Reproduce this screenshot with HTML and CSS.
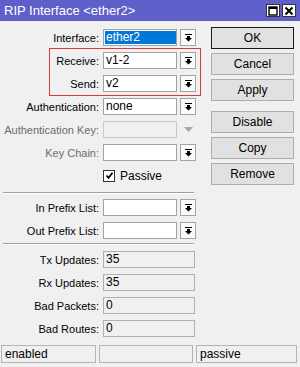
FILE: index.html
```html
<!DOCTYPE html>
<html>
<head>
<meta charset="utf-8">
<title>RIP Interface</title>
<link rel="stylesheet" href="styles.css">
</head>
<body>
<div class="window">
	<div class="titlebar">
		<span class="title">RIP Interface &lt;ether2&gt;</span>
		<span class="tbtn"><svg width="10" height="10" viewBox="0 0 10 10"><rect x="1" y="1" width="8" height="8" fill="none" stroke="#000" stroke-width="1.4"/><rect x="1" y="1" width="8" height="2" fill="#000"/></svg></span>
		<span class="tbtn"><svg width="10" height="10" viewBox="0 0 10 10"><path d="M1.5 1.5L8.5 8.5M8.5 1.5L1.5 8.5" stroke="#000" stroke-width="2"/></svg></span>
	</div>

	<div class="content">
		<div class="form">
			<div class="row">
				<span class="label">Interface:</span>
				<span class="field"><span class="sel">ether2</span></span>
				<span class="drop"><svg width="7" height="8" viewBox="0 0 7 8"><rect x="0" y="0" width="7" height="1"/><polygon points="2,2 5,2 5,4 7,4 3.5,7.5 0,4 2,4"/></svg></span>
			</div>
			<div class="group">
				<div class="row">
					<span class="label">Receive:</span>
					<span class="field">v1-2</span>
					<span class="drop"><svg width="7" height="8" viewBox="0 0 7 8"><rect x="0" y="0" width="7" height="1"/><polygon points="2,2 5,2 5,4 7,4 3.5,7.5 0,4 2,4"/></svg></span>
				</div>
				<div class="row">
					<span class="label">Send:</span>
					<span class="field">v2</span>
					<span class="drop"><svg width="7" height="8" viewBox="0 0 7 8"><rect x="0" y="0" width="7" height="1"/><polygon points="2,2 5,2 5,4 7,4 3.5,7.5 0,4 2,4"/></svg></span>
				</div>
			</div>
			<div class="row">
				<span class="label">Authentication:</span>
				<span class="field">none</span>
				<span class="drop"><svg width="7" height="8" viewBox="0 0 7 8"><rect x="0" y="0" width="7" height="1"/><polygon points="2,2 5,2 5,4 7,4 3.5,7.5 0,4 2,4"/></svg></span>
			</div>
			<div class="row">
				<span class="label dim">Authentication Key:</span>
				<span class="field off"></span>
				<span class="arrow"><svg width="9" height="5" viewBox="0 0 9 5"><polygon points="0,0 9,0 4.5,5" fill="#a6a6a6"/></svg></span>
			</div>
			<div class="row">
				<span class="label dim">Key Chain:</span>
				<span class="field"></span>
				<span class="drop"><svg width="7" height="8" viewBox="0 0 7 8"><rect x="0" y="0" width="7" height="1"/><polygon points="2,2 5,2 5,4 7,4 3.5,7.5 0,4 2,4"/></svg></span>
			</div>
			<div class="row">
				<span class="label"></span>
				<span class="check"><svg width="9" height="9" viewBox="0 0 9 9"><path d="M1.5 4.5L3.5 6.8L7.5 1.8" fill="none" stroke="#000" stroke-width="1.8"/></svg></span>
				<span class="check-text">Passive</span>
			</div>

			<div class="sep sep1"></div>

			<div class="row">
				<span class="label">In Prefix List:</span>
				<span class="field"></span>
				<span class="drop"><svg width="7" height="8" viewBox="0 0 7 8"><rect x="0" y="0" width="7" height="1"/><polygon points="2,2 5,2 5,4 7,4 3.5,7.5 0,4 2,4"/></svg></span>
			</div>
			<div class="row">
				<span class="label">Out Prefix List:</span>
				<span class="field"></span>
				<span class="drop"><svg width="7" height="8" viewBox="0 0 7 8"><rect x="0" y="0" width="7" height="1"/><polygon points="2,2 5,2 5,4 7,4 3.5,7.5 0,4 2,4"/></svg></span>
			</div>

			<div class="sep sep2"></div>

			<div class="row">
				<span class="label">Tx Updates:</span>
				<span class="field wide ro">35</span>
			</div>
			<div class="row">
				<span class="label">Rx Updates:</span>
				<span class="field wide ro">35</span>
			</div>
			<div class="row">
				<span class="label">Bad Packets:</span>
				<span class="field wide ro">0</span>
			</div>
			<div class="row">
				<span class="label">Bad Routes:</span>
				<span class="field wide ro">0</span>
			</div>
		</div>

		<div class="buttons">
			<a class="btn default" href="#">OK</a>
			<a class="btn" href="#">Cancel</a>
			<a class="btn" href="#">Apply</a>
			<a class="btn spaced" href="#">Disable</a>
			<a class="btn" href="#">Copy</a>
			<a class="btn" href="#">Remove</a>
		</div>
	</div>

	<div class="status">
		<span class="cell c1">enabled</span>
		<span class="cell c2"></span>
		<span class="cell c3">passive</span>
	</div>
</div>
</body>
</html>
```

FILE: styles.css
```css
body{margin: 0;padding: 0;background-color: #f0f0f0;font-family: "Liberation Sans", Arial, sans-serif;font-size: 11px;color: #000;}
.window{width: 300px;height: 367px;overflow: hidden;}

.titlebar{height: 21px;background-color: #5f5fc9;display: flex;align-items: center;padding: 0 4px;box-sizing: border-box;}
.title{color: #fff;flex: 1;font-size: 13px;}
.tbtn{width: 14px;height: 13px;box-sizing: border-box;background-color: #fff;border: 1px solid #333;display: flex;align-items: center;justify-content: center;margin-left: 2px;}
.tbtn svg{display: block;}

.content{display: flex;padding-top: 5px;}
.form{width: 200px;}

.row{height: 23px;display: flex;align-items: center;}
.label{width: 99px;margin-right: 4px;text-align: right;white-space: nowrap;font-size: 11px;}
.label.dim{color: #6d6d6d;}

.field{width: 74px;height: 17px;box-sizing: border-box;border: 1px solid #a3a3a3;background-color: #fff;padding-left: 2px;line-height: 15px;overflow: hidden;font-size: 12px;}
.field.off{background-color: #f0f0f0;border-color: #c8c8c8;}
.field.wide{width: 92px;}
.field.ro{background-color: #f0f0f0;border-color: #b0b0b0;}
.sel{display: block;margin-left: -1px;margin-top: 1px;height: 13px;line-height: 13px;background-color: #0078d7;color: #fff;padding-left: 1px;}

.drop{width: 16px;height: 17px;box-sizing: border-box;margin-left: 3px;border: 1px solid #a3a3a3;background-color: #fafafa;display: flex;align-items: center;justify-content: center;}
.drop svg{display: block;fill: #000;}
.arrow{width: 16px;margin-left: 3px;display: flex;justify-content: center;}

.check{width: 12px;height: 12px;box-sizing: border-box;border: 1px solid #333;background-color: #fff;display: flex;align-items: center;justify-content: center;}
.check-text{margin-left: 5px;font-size: 12px;}

.group{position: relative;}
.group::after{content: "";position: absolute;left: 49px;top: -1px;width: 152px;height: 48px;box-sizing: border-box;border: 1px solid #d8393e;pointer-events: none;}

.sep{margin-left: 3px;width: 191px;border-top: 1px solid #a0a0a0;border-bottom: 1px solid #fff;}
.sep1{margin-top: 5px;margin-bottom: 2px;}
.sep2{margin-top: 1px;margin-bottom: 3px;}

.buttons{margin-left: 11px;padding-top: 1px;display: flex;flex-direction: column;gap: 4px;}
.btn{width: 83px;height: 22px;box-sizing: border-box;border: 1px solid #adadad;background-color: #e1e1e1;color: #000;text-decoration: none;display: flex;align-items: center;justify-content: center;font-size: 12px;}
.btn.default{border-color: #1a1a1a;}
.btn.spaced{margin-top: 6px;}

.status{display: flex;margin-top: 5px;padding-left: 1px;gap: 3px;}
.cell{height: 18px;box-sizing: border-box;border: 1px solid #b4b4b4;padding-left: 3px;line-height: 16px;font-size: 12px;}
.c1{width: 95px;}
.c2{width: 94px;}
.c3{width: 101px;}
```
